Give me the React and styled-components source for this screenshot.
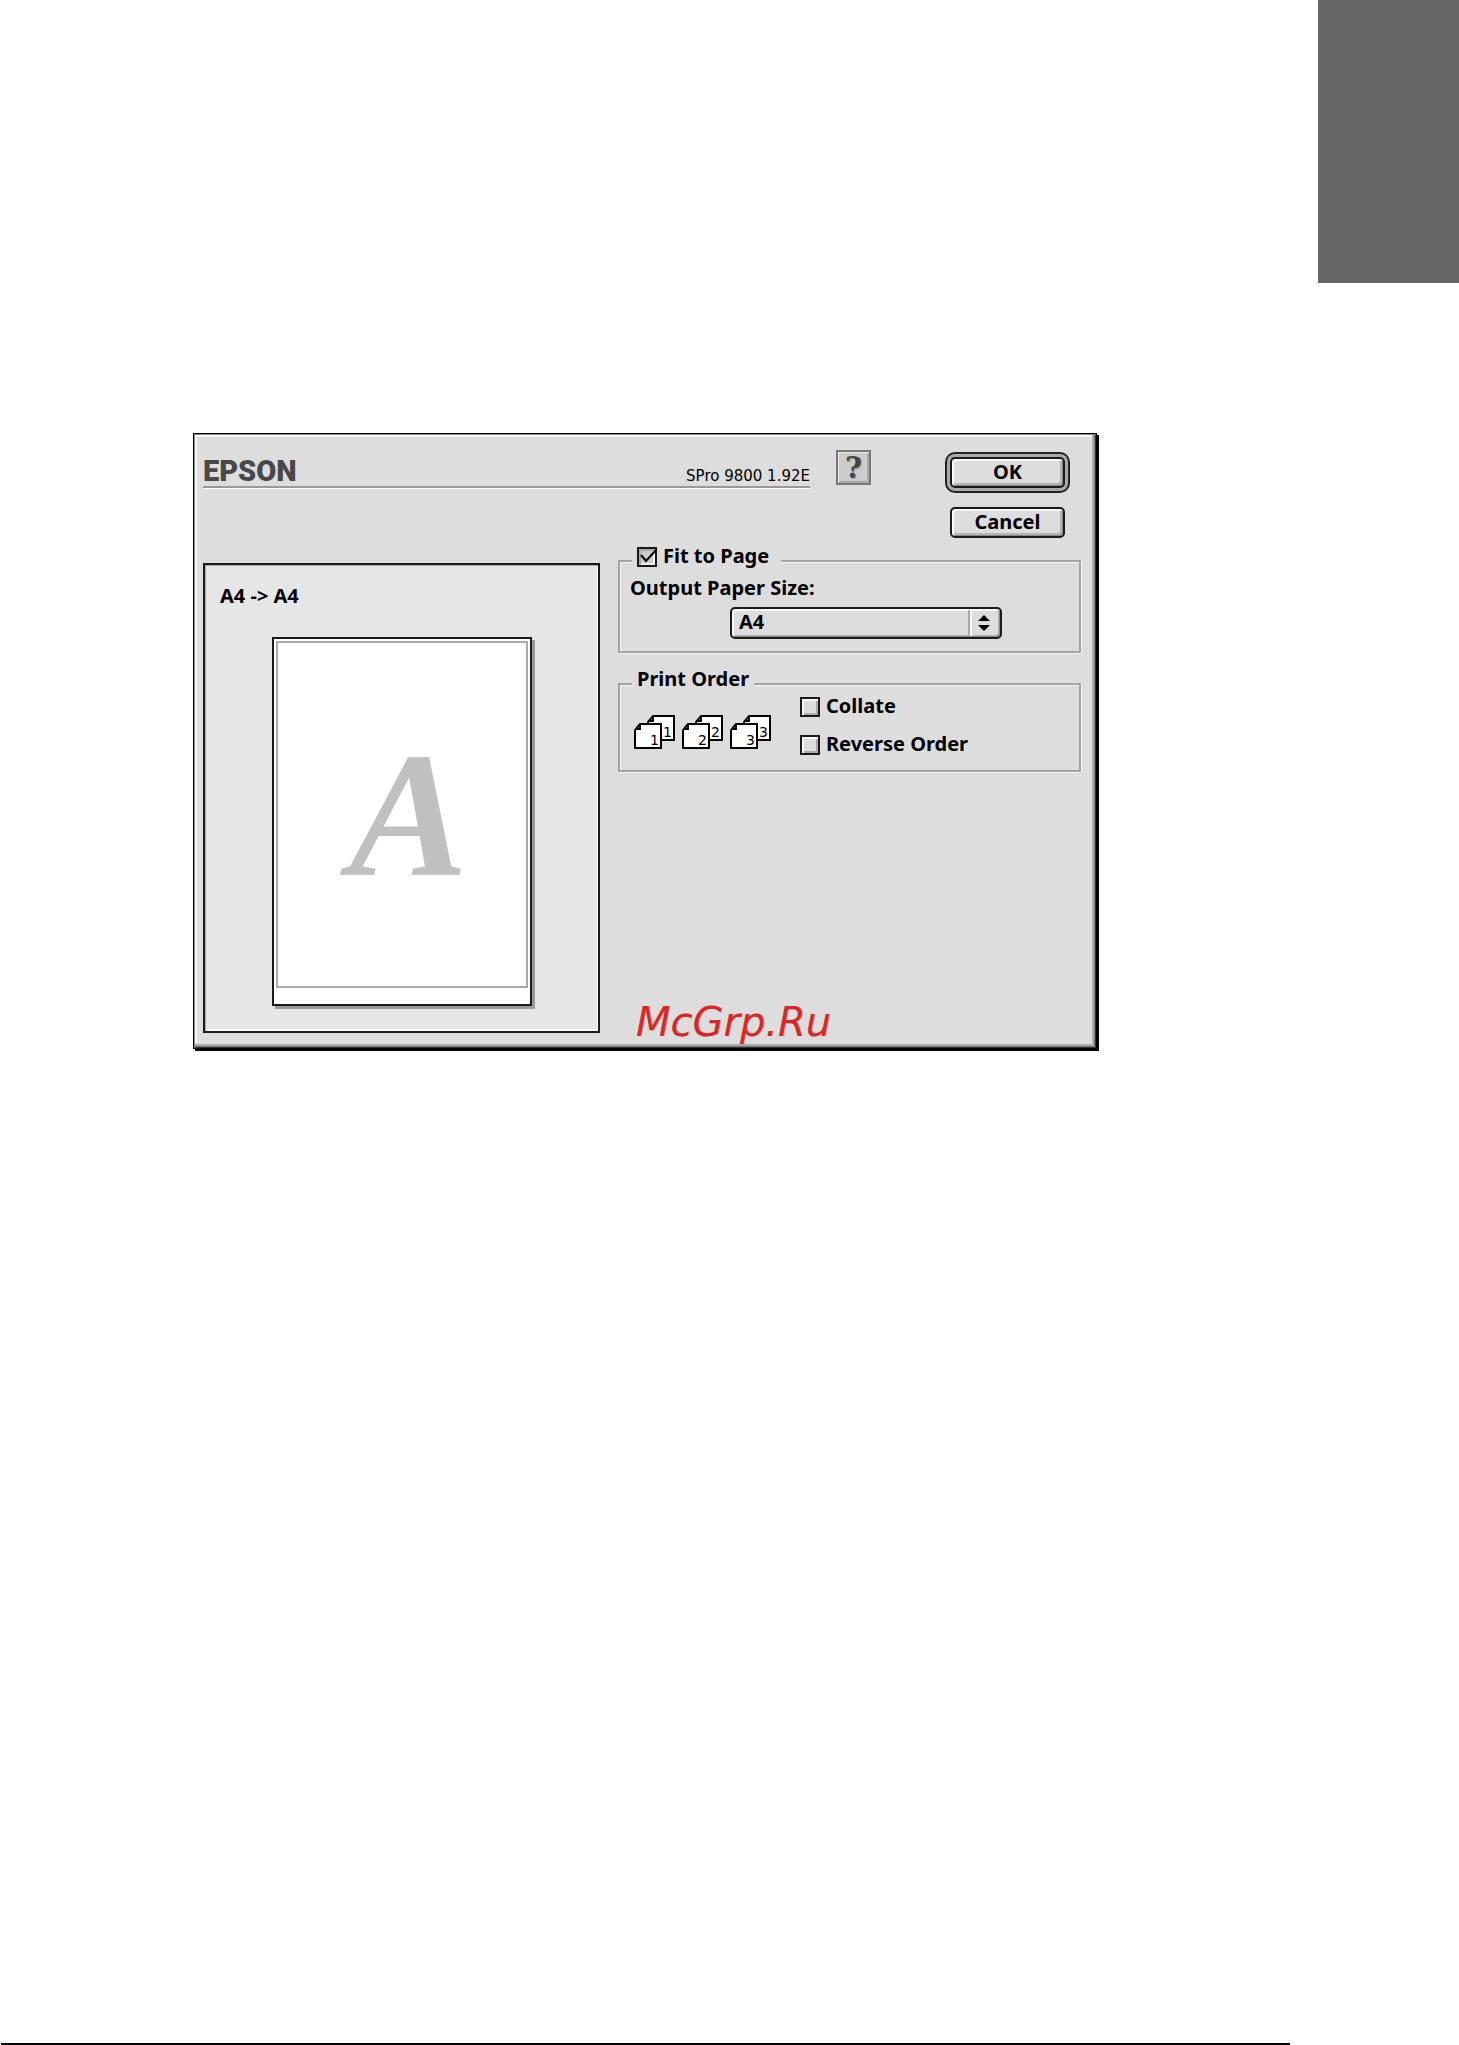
//CORE IMPORTS
import React, { Component } from "react";

import styled, { createGlobalStyle } from "styled-components";

const GlobalStyle = createGlobalStyle`
  * {
    box-sizing: border-box;
  }
  body {
    margin: 0;
    background: #fff;
    color: #000;
    font-family: "Noto Sans", "Open Sans", sans-serif;
    font-size: 20px;
    font-weight: 700;
    line-height: 20px;
  }
`;

//PAGE
const Sheet = styled.div`
  display: flex;
  flex-direction: column;
  min-height: 100vh;
`;

const ChapterTab = styled.div`
  align-self: flex-end;
  width: 141px;
  height: 283px;
  background: #666;
`;

const FooterRule = styled.hr`
  align-self: stretch;
  height: 2px;
  margin: auto 169px 0 1px;
  border: 0;
  background: #000;
`;

//DIALOG
const Dialog = styled.form`
  max-width: 904px;
  margin: 150px 169px 40px 193px;
  padding: 16px 15px 15px 9px;
  border: 1px solid #000;
  background: #ddd;
  box-shadow: 2px 2px 0 #000, inset 1px 1px 0 #888, inset -1px -1px 0 #333,
    inset -2px -2px 0 #777, inset -4px -4px 0 #aaa, inset 3px 3px 0 #f6f6f6;
`;

const Header = styled.header`
  display: flex;
  align-items: flex-start;
`;

const Brand = styled.div`
  display: flex;
  align-items: baseline;
  justify-content: space-between;
  flex: 0 1 607px;
  padding-top: 9px;
  border-bottom: 2px solid #999;
  box-shadow: 0 1px 0 #fff;
`;

const Logo = styled.span`
  color: #484848;
  font-family: Roboto, sans-serif;
  font-size: 29px;
  font-weight: 900;
  line-height: 24px;
`;

const Version = styled.span`
  font-family: "DejaVu Sans", sans-serif;
  font-size: 15px;
  font-weight: 400;
`;

const HelpButton = styled.button`
  width: 35px;
  height: 35px;
  margin-left: 26px;
  padding: 0;
  border: 2px solid #777;
  background: #ccc;
  box-shadow: inset 1px 1px 0 #eee, inset -2px -2px 0 #aaa;
  color: #444;
  font-family: "DejaVu Serif", serif;
  font-size: 29px;
  font-weight: 700;
  line-height: 28px;
  text-shadow: 1px 1px 0 #999;
`;

const Actions = styled.div`
  display: flex;
  flex-direction: column;
  gap: 19px;
  margin: 7px 16px 0 auto;
`;

const PushButton = styled.button`
  width: 115px;
  height: 31px;
  padding: 0 0 2px;
  border: 2px solid #1a1a1a;
  border-radius: 5px;
  background: #ddd;
  box-shadow: inset 2px 2px 0 #f8f8f8, inset -1px -1px 0 #888,
    inset -3px -3px 0 #b4b4b4
    ${props => props.$primary && ", 0 0 0 3px #aaa, 0 0 0 5px #222"};
  color: #000;
  font: inherit;
`;

const Content = styled.div`
  display: grid;
  grid-template-columns: minmax(0, 397px) minmax(0, 1fr);
  gap: 18px;
  margin-top: 8px;
`;

//PREVIEW
const Preview = styled.section`
  margin-top: 17px;
  padding: 21px 15px 25px;
  border: 2px solid #1a1a1a;
  background: #e6e6e6;
  box-shadow: inset 1px 1px 0 #aaa, inset -1px -2px 0 #fff;
`;

const PreviewTitle = styled.h2`
  margin: 0 0 31px;
  font: inherit;
`;

const Paper = styled.div`
  width: 260px;
  height: 369px;
  margin: 0 auto;
  padding: 2px 2px 16px;
  border: 2px solid #1a1a1a;
  background: #fff;
  box-shadow: 3px 3px 0 #999;
`;

const Printable = styled.div`
  display: flex;
  align-items: center;
  justify-content: center;
  height: 100%;
  padding-left: 14px;
  border: 2px solid #aaa;
  color: #c0c0c0;
  font-family: "Liberation Serif", serif;
  font-size: 178px;
  font-style: italic;
  line-height: 176px;
`;

//SETTINGS
const Settings = styled.div`
  display: flex;
  flex-direction: column;
  gap: 16px;
`;

const Group = styled.fieldset`
  min-width: 0;
  margin: 0;
  padding: 0 10px 12px;
  border: 2px solid #a3a3a3;
  box-shadow: 1px 1px 0 #f6f6f6, inset 1px 1px 0 #f6f6f6;
`;

const GroupTitle = styled.legend`
  height: 30px;
  margin-left: 2px;
  padding: 0 5px;
  background: #ddd;
`;

const CheckLabel = styled.label`
  display: flex;
  gap: 6px;
  padding-right: 7px;
`;

const CheckBox = styled.span`
  display: grid;
  width: 20px;
  height: 20px;
  margin-top: 1px;
`;

const CheckInput = styled.input`
  grid-area: 1 / 1;
  appearance: none;
  width: 20px;
  height: 20px;
  margin: 0;
  border: 2px solid #1a1a1a;
  background: #ddd;
  box-shadow: inset 2px 2px 0 #f8f8f8, inset -2px -2px 0 #aaa;

  & + svg {
    display: none;
    grid-area: 1 / 1;
    pointer-events: none;
  }
  &:checked {
    background: #ccc;
    box-shadow: inset 2px 2px 0 #aaa, inset -2px -2px 0 #eee;
  }
  &:checked + svg {
    display: block;
  }
`;

const FieldLabel = styled.label`
  display: block;
  margin-top: 2px;
`;

const PopUp = styled.div`
  display: grid;
  max-width: 272px;
  margin: 9px 0 0 100px;
`;

const PopUpSelect = styled.select`
  grid-area: 1 / 1;
  appearance: none;
  width: 100%;
  height: 32px;
  padding: 0 40px 2px 7px;
  border: 2px solid #1a1a1a;
  border-radius: 5px;
  background: #ddd;
  box-shadow: inset 2px 2px 0 #f8f8f8, inset -1px -1px 0 #888,
    inset -2px -2px 0 #b4b4b4;
  color: #000;
  font: inherit;
`;

const PopUpArrows = styled.svg`
  grid-area: 1 / 1;
  justify-self: end;
  pointer-events: none;
`;

const OrderRow = styled.div`
  display: flex;
  align-items: flex-start;
  margin-top: -3px;
  padding: 0 0 3px 4px;
`;

const OrderIcons = styled.svg`
  flex: none;
  margin: 19px 29px 0 0;
`;

const OrderOptions = styled.div`
  display: flex;
  flex-direction: column;
  gap: 17px;
`;

const SiteMark = styled.div`
  margin: 210px 0 -20px 18px;
  color: #dc2626;
  font-family: "DejaVu Sans", sans-serif;
  font-size: 40px;
  font-style: italic;
  font-weight: 400;
  line-height: 48px;
  text-shadow: 1px 0 0 #8888;
`;

const Check = ({ id, label, defaultChecked }) => (
  <CheckLabel htmlFor={id}>
    <CheckBox>
      <CheckInput type="checkbox" id={id} defaultChecked={defaultChecked} />
      <svg width="20" height="20" viewBox="0 0 20 20" fill="none">
        <path d="M4 8l5 6L20 2" stroke="#000" strokeWidth="2" />
      </svg>
    </CheckBox>
    {label}
  </CheckLabel>
);

// one sheet with its top left corner folded over
const FoldedPage = ({ x, y, number }) => (
  <g transform={`translate(${x} ${y})`}>
    <path
      d="M6 1H27V25H1V7Z"
      fill="#fff"
      stroke="#000"
      strokeWidth="2"
    />
    <path d="M6 1V6H1" fill="none" stroke="#000" strokeWidth="2" />
    <text
      x="16"
      y="22"
      fontFamily="DejaVu Sans, sans-serif"
      fontSize="14"
      fontWeight="400"
    >
      {number}
    </text>
  </g>
);

export default class App extends Component {
  state = {
    paper: "A4"
  };

  handlePaper = e => this.setState({ paper: e.target.value });
  handleSubmit = e => e.preventDefault();

  render() {
    const { paper } = this.state;

    return (
      <Sheet>
        <GlobalStyle />
        <ChapterTab />

        <Dialog onSubmit={this.handleSubmit}>
          <Header>
            <Brand>
              <Logo>EPSON</Logo>
              <Version>SPro 9800 1.92E</Version>
            </Brand>
            <HelpButton type="button">?</HelpButton>
            <Actions>
              <PushButton type="submit" $primary>
                OK
              </PushButton>
              <PushButton type="button">Cancel</PushButton>
            </Actions>
          </Header>

          <Content>
            <Preview>
              <PreviewTitle>A4 -&gt; {paper}</PreviewTitle>
              <Paper>
                <Printable>A</Printable>
              </Paper>
            </Preview>

            <Settings>
              <Group>
                <GroupTitle>
                  <Check id="fit" label="Fit to Page" defaultChecked />
                </GroupTitle>
                <FieldLabel htmlFor="paper">Output Paper Size:</FieldLabel>
                <PopUp>
                  <PopUpSelect
                    id="paper"
                    value={paper}
                    onChange={this.handlePaper}
                  >
                    <option>A4</option>
                  </PopUpSelect>
                  <PopUpArrows width="34" height="32" viewBox="0 0 34 32">
                    <path d="M1 3V29" stroke="#aaa" strokeWidth="2" />
                    <path d="M3 3V29" stroke="#f8f8f8" strokeWidth="2" />
                    <path d="M10 14L16 8L22 14ZM10 18L16 24L22 18Z" />
                  </PopUpArrows>
                </PopUp>
              </Group>

              <Group>
                <GroupTitle>Print Order</GroupTitle>
                <OrderRow>
                  <OrderIcons width="137" height="34" viewBox="0 0 137 34">
                    {[1, 2, 3].map((number, i) => (
                      <g key={number}>
                        <FoldedPage x={i * 48 + 13} y={0} number={number} />
                        <FoldedPage x={i * 48} y={8} number={number} />
                      </g>
                    ))}
                  </OrderIcons>
                  <OrderOptions>
                    <Check id="collate" label="Collate" />
                    <Check id="reverse" label="Reverse Order" />
                  </OrderOptions>
                </OrderRow>
              </Group>

              <SiteMark>McGrp.Ru</SiteMark>
            </Settings>
          </Content>
        </Dialog>

        <FooterRule />
      </Sheet>
    );
  }
}
